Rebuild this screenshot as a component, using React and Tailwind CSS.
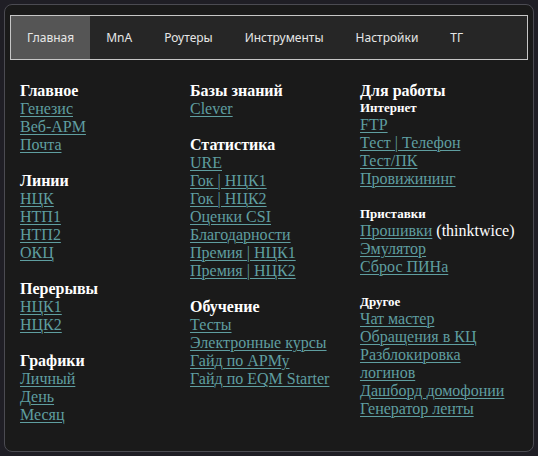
import React from "react";

const tabs = ["Главная", "MnA", "Роутеры", "Инструменты", "Настройки", "ТГ"];

// each column is a list of blocks; a block has a title and links
const columns = [
  [
    { title: "Главное", links: ["Генезис", "Веб-АРМ", "Почта"] },
    { title: "Линии", links: ["НЦК", "НТП1", "НТП2", "ОКЦ"] },
    { title: "Перерывы", links: ["НЦК1", "НЦК2"] },
    { title: "Графики", links: ["Личный", "День", "Месяц"] },
  ],
  [
    { title: "Базы знаний", links: ["Clever"] },
    {
      title: "Статистика",
      links: ["URE", "Гок | НЦК1", "Гок | НЦК2", "Оценки CSI", "Благодарности", "Премия | НЦК1", "Премия | НЦК2"],
    },
    { title: "Обучение", links: ["Тесты", "Электронные курсы", "Гайд по АРМу", "Гайд по EQM Starter"] },
  ],
];

const work = [
  { title: "Интернет", links: ["FTP", "Тест | Телефон", "Тест/ПК", "Провижининг"] },
  { title: "Приставки", links: ["Прошивки", "Эмулятор", "Сброс ПИНа"] },
  { title: "Другое", links: ["Чат мастер", "Обращения в КЦ", "Разблокировка логинов", "Дашборд домофонии", "Генератор ленты"] },
];

function Link({ children }) {
  return (
    <a href="#" className="text-[#5f9ea0] underline underline-offset-[2px] decoration-1">
      {children}
    </a>
  );
}

export default function App() {
  return (
    <div className="w-[538px] h-[456px] bg-[#1f1e25] p-[4px] overflow-hidden">
      <div className="h-[448px] rounded-[8px] border border-[#4b4b52] bg-[#1a1a1a] px-[5px] pt-[10px]">
        {/* tab bar */}
        <div className="flex h-[45px] border border-[#c6c6c6] bg-[#262626] font-['Noto_Sans',sans-serif] text-[12px] text-[#e6e6e6]">
          {tabs.map((t, i) => (
            <div
              key={t}
              className={`flex items-center px-[16px] ${i === 0 ? "bg-[#555555]" : ""}`}
            >
              {t}
            </div>
          ))}
        </div>

        {/* content */}
        <div className="flex pl-[10px] pt-[22px] font-['Liberation_Serif',serif] text-[16px] leading-[18px] text-white">
          {columns.map((col, ci) => (
            <div key={ci} className="w-[170px] flex flex-col gap-[18px]">
              {col.map((b) => (
                <div key={b.title} className="flex flex-col">
                  <b>{b.title}</b>
                  {b.links.map((l) => (
                    <div key={l}>
                      <Link>{l}</Link>
                    </div>
                  ))}
                </div>
              ))}
            </div>
          ))}

          <div className="w-[155px] flex flex-col">
            <b>Для работы</b>
            <div className="flex flex-col gap-[18px]">
              {work.map((b) => (
                <div key={b.title} className="flex flex-col">
                  <b className="text-[13px] leading-[16px]">{b.title}</b>
                  {b.links.map((l) => (
                    <div key={l}>
                      <Link>{l}</Link>
                      {l === "Прошивки" && <span> (thinktwice)</span>}
                    </div>
                  ))}
                </div>
              ))}
            </div>
          </div>
        </div>
      </div>
    </div>
  );
}
